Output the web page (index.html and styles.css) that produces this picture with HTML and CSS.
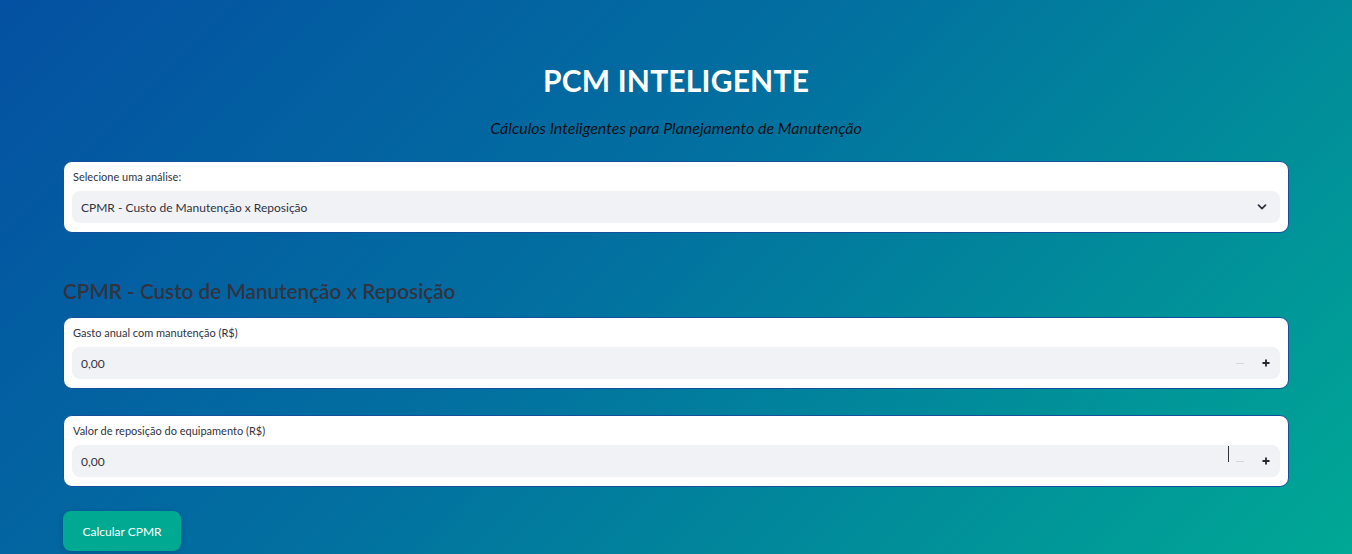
FILE: index.html
```html
<!DOCTYPE html>
<html lang="pt">
<head>
<meta charset="utf-8">
<title>PCM Inteligente</title>
<link rel="stylesheet" href="styles.css">
</head>
<body>
<main class="app">
  <header class="hero">
    <h1 class="title">PCM INTELIGENTE</h1>
    <p class="subtitle">Cálculos Inteligentes para Planejamento de Manutenção</p>
  </header>

  <section class="card">
    <label class="field-label">Selecione uma análise:</label>
    <div class="select">
      <span class="select-value">CPMR - Custo de Manutenção x Reposição</span>
      <svg class="chevron" width="12" height="12" viewBox="0 0 12 12"><path d="M2.5 4.2 L6 7.6 L9.5 4.2" fill="none" stroke="#31333f" stroke-width="1.8" stroke-linecap="round" stroke-linejoin="round"/></svg>
    </div>
  </section>

  <h2 class="section-title">CPMR - Custo de Manutenção x Reposição</h2>

  <section class="card card-first">
    <label class="field-label">Gasto anual com manutenção (R$)</label>
    <div class="number">
      <span class="number-value">0,00</span>
      <span class="step minus"></span>
      <span class="step plus">
        <svg width="10" height="10" viewBox="0 0 10 10"><path d="M5 1.5 V8.5 M1.5 5 H8.5" stroke="#262730" stroke-width="1.8"/></svg>
      </span>
    </div>
  </section>

  <section class="card card-gap">
    <label class="field-label">Valor de reposição do equipamento (R$)</label>
    <div class="number">
      <span class="number-value">0,00</span>
      <span class="caret"></span>
      <span class="step minus"></span>
      <span class="step plus">
        <svg width="10" height="10" viewBox="0 0 10 10"><path d="M5 1.5 V8.5 M1.5 5 H8.5" stroke="#262730" stroke-width="1.8"/></svg>
      </span>
    </div>
  </section>

  <button class="btn">Calcular CPMR</button>
</main>
</body>
</html>
```

FILE: styles.css
```css
* { box-sizing: border-box; }
html, body { height: 100%; }
body {
  margin: 0;
  font-family: "Source Sans Pro", Lato, "Noto Sans", sans-serif;
  color: #31333f;
  background: linear-gradient(135deg, #0450a2 0%, #0270a0 45%, #00a895 100%);
  overflow: hidden;
}
.app {
  width: 1226px;
  margin: 0 auto;
  padding-top: 58px;
  display: flex;
  flex-direction: column;
}
.hero { text-align: center; }
.title {
  margin: 0;
  font-size: 30px;
  font-weight: 700;
  color: #ffffff;
  line-height: 44px;
  letter-spacing: 0.2px;
}
.subtitle {
  margin: 15px 0 0;
  font-size: 16px;
  font-style: italic;
  color: #0e1117;
  line-height: 22px;
}
.card {
  margin-top: 22px;
  background: #ffffff;
  border: 1px solid #12509d;
  border-radius: 9px;
  padding: 8px 8px 9px 8px;
  display: flex;
  flex-direction: column;
}
.card-first { margin-top: 13px; }
.card-gap { margin-top: 26px; }
.field-label {
  font-size: 11px;
  line-height: 14px;
  color: #31333f;
  padding-left: 1px;
  margin-bottom: 7px;
}
.select, .number {
  height: 32px;
  background: #f0f2f6;
  border-radius: 8px;
  display: flex;
  align-items: center;
  padding: 0 10px 0 9px;
  font-size: 12px;
  color: #31333f;
  position: relative;
}
.number { padding-right: 1px; }
.select-value, .number-value { flex: 1; }
.chevron { margin-right: 2px; }
.step {
  width: 26px;
  height: 32px;
  display: flex;
  align-items: center;
  justify-content: center;
}
.minus::before {
  content: "";
  width: 8px;
  height: 1px;
  background: #d3d6dd;
}
.plus svg { display: block; }
.caret {
  position: absolute;
  left: 1156px;
  top: 1px;
  width: 1px;
  height: 16px;
  background: #31333f;
}
.section-title {
  margin: 45px 0 0;
  font-size: 20.7px;
  font-weight: 600;
  line-height: 26px;
  color: #31333f;
}
.btn {
  margin-top: 24px;
  align-self: flex-start;
  width: 118px;
  height: 40px;
  border: none;
  border-radius: 8px;
  background: #00a991;
  color: #ffffff;
  font-family: inherit;
  font-size: 12px;
  box-shadow: 0 2px 6px rgba(0, 0, 0, 0.15);
}
```
